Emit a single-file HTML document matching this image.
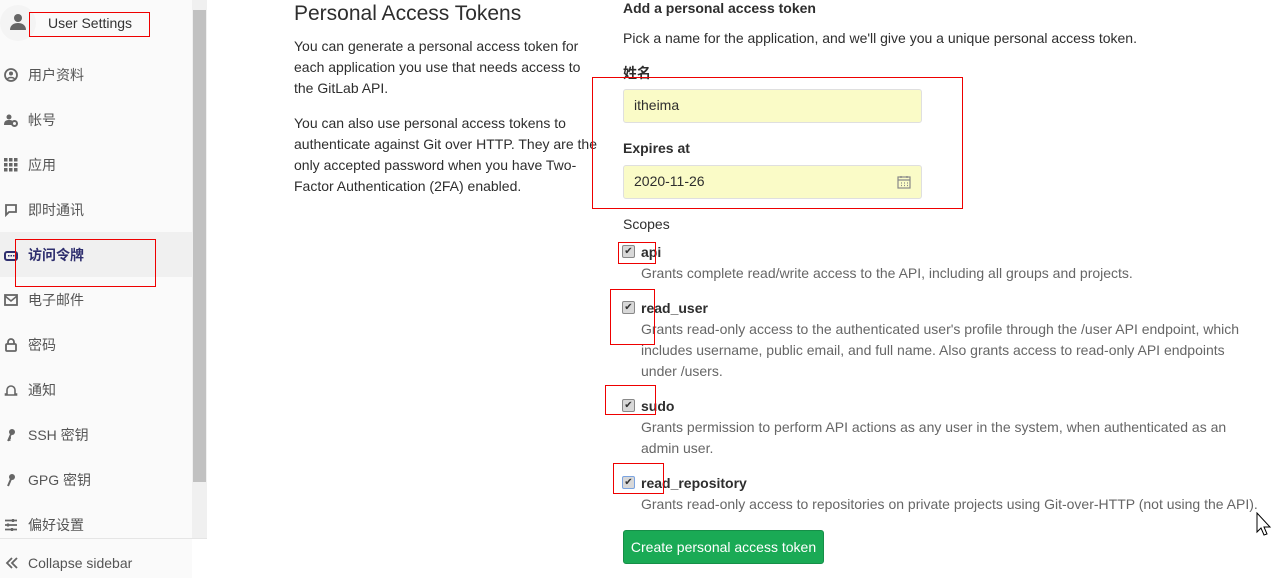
<!DOCTYPE html>
<html><head><meta charset="utf-8"><style>
*{margin:0;padding:0;box-sizing:border-box}
body{width:1276px;height:578px;overflow:hidden;background:#fff;font-family:"Liberation Sans","Noto Sans CJK SC",sans-serif;color:#2e2e2e;position:relative;font-size:14px}
.a{position:absolute;white-space:nowrap}
.side{position:absolute;left:0;top:0;width:192px;height:578px;background:#fafafa}
.nav{position:absolute;left:28px;font-size:14px;color:#555}
.ic{position:absolute;left:4px;width:14px;height:14px;color:#666}
.rb{position:absolute;border:1px solid #e00}
.p{font-size:14px;line-height:21px;color:#2e2e2e}
.b{font-weight:bold;font-size:14px}
.d{font-size:14px;color:#666;line-height:21px}
.inp{position:absolute;left:623px;width:299px;height:34px;background:#fafbc7;border:1px solid #dfdfdf;border-radius:3px;padding:7px 10px;font-size:14px}
.cb{position:absolute;left:622px;width:13px;height:13px;border:1px solid #888;border-radius:2px;background:#d8d8d8;font-size:10px;line-height:11px;text-align:center;color:#333}
</style></head><body>
<div class="side">
<div class="a" style="left:0;top:5px;width:36px;height:36px;border-radius:50%;background:#f4f4f4"></div>
<svg class="a" style="left:9px;top:13px" width="18" height="18" viewBox="0 0 18 18"><circle cx="9" cy="5" r="4" fill="#666"/><path d="M1 17c0-5 4-7 8-7s8 2 8 7z" fill="#666"/></svg>
<div class="a" style="left:48px;top:15px;font-size:14px;color:#333">User Settings</div>
<div class="a" style="left:0;top:232px;width:192px;height:45px;background:#f0f0f0"></div>
<svg class="ic" style="top:68px" viewBox="0 0 14 14"><circle cx="7" cy="7" r="6" fill="none" stroke="#666" stroke-width="1.8"/><circle cx="7" cy="5.5" r="2" fill="#666"/><path d="M3.5 11c1-2 6-2 7 0" stroke="#666" stroke-width="1.5" fill="none"/></svg>
<div class="nav" style="top:65px">用户资料</div>
<svg class="ic" style="top:113px" viewBox="0 0 14 14"><circle cx="5" cy="4" r="2.5" fill="#666"/><path d="M0 12c0-4 2-5 5-5s4 1 4 2v3z" fill="#666"/><circle cx="10.5" cy="10.5" r="2.5" fill="none" stroke="#666" stroke-width="2"/></svg>
<div class="nav" style="top:110px">帐号</div>
<svg class="ic" style="top:158px" viewBox="0 0 14 14" fill="#666"><rect x="0" y="0" width="3.5" height="3.5"/><rect x="5" y="0" width="3.5" height="3.5"/><rect x="10" y="0" width="3.5" height="3.5"/><rect x="0" y="5" width="3.5" height="3.5"/><rect x="5" y="5" width="3.5" height="3.5"/><rect x="10" y="5" width="3.5" height="3.5"/><rect x="0" y="10" width="3.5" height="3.5"/><rect x="5" y="10" width="3.5" height="3.5"/><rect x="10" y="10" width="3.5" height="3.5"/></svg>
<div class="nav" style="top:155px">应用</div>
<svg class="ic" style="top:203px" viewBox="0 0 14 14"><path d="M2 2h10v7H5l-3 3z" fill="none" stroke="#666" stroke-width="1.8"/></svg>
<div class="nav" style="top:200px">即时通讯</div>
<svg class="ic" style="top:249px" viewBox="0 0 14 14"><rect x="1" y="3" width="12" height="8" rx="2" fill="none" stroke="#2e2e6e" stroke-width="2"/><rect x="4" y="6" width="1.5" height="1.5" fill="#2e2e6e"/><rect x="6.5" y="6" width="1.5" height="1.5" fill="#2e2e6e"/><rect x="9" y="6" width="1.5" height="1.5" fill="#2e2e6e"/></svg>
<div class="nav" style="top:245px;color:#2e2e6e;font-weight:bold">访问令牌</div>
<svg class="ic" style="top:293px" viewBox="0 0 14 14"><rect x="1" y="2" width="12" height="10" fill="none" stroke="#666" stroke-width="1.8"/><path d="M1 3l6 5 6-5" fill="none" stroke="#666" stroke-width="1.6"/></svg>
<div class="nav" style="top:290px">电子邮件</div>
<svg class="ic" style="top:338px" viewBox="0 0 14 14"><rect x="2" y="6" width="10" height="7" rx="1" fill="none" stroke="#666" stroke-width="1.8"/><path d="M4 6V4a3 3 0 016 0v2" fill="none" stroke="#666" stroke-width="1.8"/></svg>
<div class="nav" style="top:335px">密码</div>
<svg class="ic" style="top:383px" viewBox="0 0 14 14"><path d="M3 11V7a4 4 0 018 0v4h1.5v1h-11v-1z" fill="none" stroke="#666" stroke-width="1.6"/></svg>
<div class="nav" style="top:380px">通知</div>
<svg class="ic" style="top:428px" viewBox="0 0 14 14"><circle cx="8" cy="4" r="3" fill="#666"/><path d="M7 6l-3 7M5 10h2M4.5 12h2" stroke="#666" stroke-width="1.8"/></svg>
<div class="nav" style="top:425px">SSH 密钥</div>
<svg class="ic" style="top:473px" viewBox="0 0 14 14"><circle cx="8" cy="4" r="3" fill="#666"/><path d="M7 6l-3 7" stroke="#666" stroke-width="2"/></svg>
<div class="nav" style="top:470px">GPG 密钥</div>
<svg class="ic" style="top:518px" viewBox="0 0 14 14" stroke="#666" stroke-width="1.8"><path d="M1 2.5h12M1 7h12M1 11.5h12"/><path d="M9 1v3M4 5.5v3M8 10v3" stroke-width="2.2"/></svg>
<div class="nav" style="top:515px">偏好设置</div>
<div class="a" style="left:0;top:538px;width:207px;height:1px;background:#e5e5e5"></div>
<svg class="a" style="left:5px;top:556px" width="14" height="14" viewBox="0 0 14 14" fill="none" stroke="#666" stroke-width="1.8"><path d="M7 2L2 7l5 5M12 2L7 7l5 5"/></svg>
<div class="a" style="left:28px;top:555px;color:#555">Collapse sidebar</div>
</div>
<div class="a" style="left:192px;top:0;width:15px;height:538px;background:#f0f0f0"></div>
<div class="a" style="left:193px;top:10px;width:13px;height:472px;background:#c1c1c1"></div>

<div class="a" style="left:294px;top:2px;font-size:21px;color:#2e2e2e">Personal Access Tokens</div>
<div class="a p" style="left:294px;top:36px">You can generate a personal access token for<br>each application you use that needs access to<br>the GitLab API.</div>
<div class="a p" style="left:294px;top:113px">You can also use personal access tokens to<br>authenticate against Git over HTTP. They are the<br>only accepted password when you have Two-<br>Factor Authentication (2FA) enabled.</div>

<div class="a b" style="left:623px;top:0px">Add a personal access token</div>
<div class="a" style="left:623px;top:30px">Pick a name for the application, and we'll give you a unique personal access token.</div>
<div class="a b" style="left:623px;top:63px">姓名</div>
<div class="inp" style="top:89px">itheima</div>
<div class="a b" style="left:623px;top:140px">Expires at</div>
<div class="inp" style="top:165px">2020-11-26</div>
<svg class="a" style="left:897px;top:175px" width="14" height="14" viewBox="0 0 14 14" fill="none" stroke="#888" stroke-width="1.2"><rect x="1" y="2" width="12" height="11"/><path d="M1 5h12M4 8h1M7 8h1M10 8h1M4 10.5h1M7 10.5h1M10 10.5h1M4 1v2M10 1v2"/></svg>
<div class="a" style="left:623px;top:216px;color:#2e2e2e">Scopes</div>

<div class="cb" style="top:245px">✔</div>
<div class="a b" style="left:641px;top:244px">api</div>
<div class="a d" style="left:641px;top:263px">Grants complete read/write access to the API, including all groups and projects.</div>
<div class="cb" style="top:301px">✔</div>
<div class="a b" style="left:641px;top:300px">read_user</div>
<div class="a d" style="left:641px;top:319px">Grants read-only access to the authenticated user's profile through the /user API endpoint, which<br>includes username, public email, and full name. Also grants access to read-only API endpoints<br>under /users.</div>
<div class="cb" style="top:399px">✔</div>
<div class="a b" style="left:641px;top:398px">sudo</div>
<div class="a d" style="left:641px;top:417px">Grants permission to perform API actions as any user in the system, when authenticated as an<br>admin user.</div>
<div class="cb" style="top:476px;border-color:#7aa3e0">✔</div>
<div class="a b" style="left:641px;top:475px">read_repository</div>
<div class="a d" style="left:641px;top:494px">Grants read-only access to repositories on private projects using Git-over-HTTP (not using the API).</div>
<div class="a" style="left:623px;top:530px;width:201px;height:34px;background:#1aaa55;border:1px solid #168f48;border-radius:3px;color:#fff;font-size:14px;line-height:32px;text-align:center">Create personal access token</div>
<svg class="a" style="left:1256px;top:512px" width="16" height="26" viewBox="0 0 16 26"><path d="M1 1v19l4-4 3 7 3-1-3-7h6z" fill="#fff" stroke="#000" stroke-width="1"/></svg>

<div class="rb" style="left:29px;top:12px;width:121px;height:25px"></div>
<div class="rb" style="left:15px;top:239px;width:141px;height:48px"></div>
<div class="rb" style="left:592px;top:77px;width:371px;height:132px"></div>
<div class="rb" style="left:618px;top:242px;width:38px;height:22px"></div>
<div class="rb" style="left:610px;top:289px;width:45px;height:56px"></div>
<div class="rb" style="left:605px;top:385px;width:51px;height:30px"></div>
<div class="rb" style="left:613px;top:463px;width:51px;height:31px"></div>
</body></html>
